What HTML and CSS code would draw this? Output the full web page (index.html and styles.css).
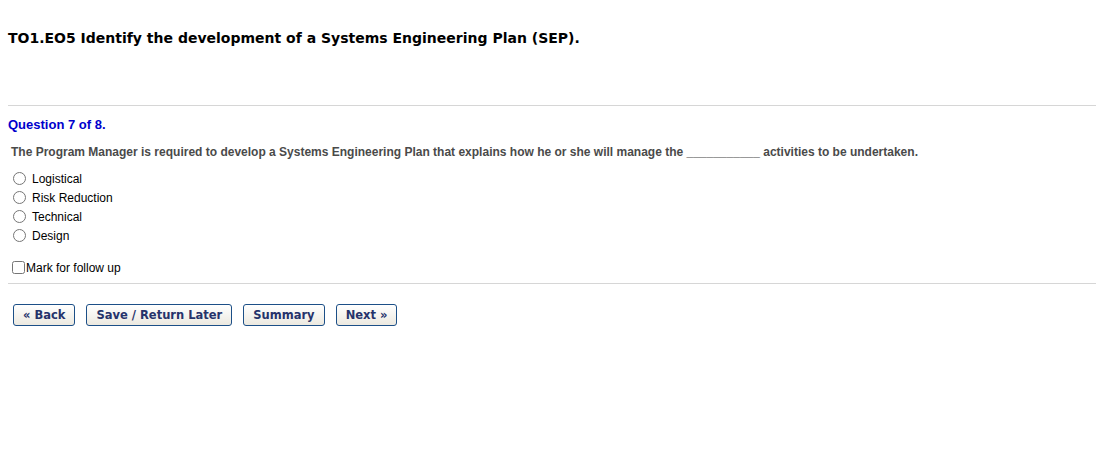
FILE: index.html
```html
<!DOCTYPE html>
<html>
<head>
<meta charset="utf-8">
<link rel="stylesheet" href="styles.css">
</head>
<body>
<div class="page">
  <h1 class="title">TO1.EO5 Identify the development of a Systems Engineering Plan (SEP).</h1>
  <hr class="rule rule-top">
  <div class="qnum">Question 7 of 8.</div>
  <div class="qtext">The Program Manager is required to develop a Systems Engineering Plan that explains how he or she will manage the ___________ activities to be undertaken.</div>
  <div class="options">
    <label class="opt"><input type="radio" name="a"><span>Logistical</span></label>
    <label class="opt"><input type="radio" name="a"><span>Risk Reduction</span></label>
    <label class="opt"><input type="radio" name="a"><span>Technical</span></label>
    <label class="opt"><input type="radio" name="a"><span>Design</span></label>
  </div>
  <label class="mark"><input type="checkbox"><span>Mark for follow up</span></label>
  <hr class="rule rule-bottom">
  <div class="buttons">
    <button class="btn">« Back</button>
    <button class="btn">Save / Return Later</button>
    <button class="btn">Summary</button>
    <button class="btn">Next »</button>
  </div>
</div>
</body>
</html>
```

FILE: styles.css
```css
html, body {
  margin: 0;
  padding: 0;
  background: #ffffff;
}
.page {
  padding: 0 0 0 8px;
  font-family: "Liberation Sans", Arial, sans-serif;
}
.title {
  font-family: "DejaVu Sans", Verdana, sans-serif;
  font-weight: bold;
  font-size: 14px;
  color: #000;
  margin: 0;
  padding-top: 30px;
  line-height: 16px;
}
.rule {
  border: 0;
  border-top: 1px solid #d6d6d6;
  margin: 0;
  height: 0;
}
.rule-top {
  margin-top: 59px;
}
.qnum {
  margin-top: 11px;
  color: #0000cc;
  font-weight: bold;
  font-size: 13px;
  line-height: 15px;
}
.qtext {
  margin-top: 13px;
  padding-left: 3px;
  color: #4a4a4a;
  font-weight: bold;
  font-size: 12px;
  line-height: 14px;
}
.options {
  margin-top: 10px;
  display: flex;
  flex-direction: column;
}
.opt {
  display: flex;
  align-items: center;
  height: 19px;
  font-size: 12px;
  color: #000;
}
.opt input {
  margin: 0 6px 0 5px;
  width: 13px;
  height: 13px;
}
.mark {
  margin-top: 15px;
  display: flex;
  align-items: center;
  height: 15px;
  font-size: 12px;
  color: #000;
}
.mark input {
  margin: 0 1px 0 4px;
  width: 13px;
  height: 13px;
}
.rule-bottom {
  margin-top: 8px;
}
.buttons {
  margin-top: 20px;
  padding-left: 5px;
  display: flex;
  gap: 11px;
}
.btn {
  font-family: "DejaVu Sans", Verdana, sans-serif;
  font-weight: bold;
  font-size: 11.5px;
  color: #26336b;
  background: linear-gradient(#ffffff, #ece9e0);
  border: 1px solid #1c4f87;
  border-radius: 3px;
  height: 22px;
  padding: 0 9px;
  line-height: 20px;
}
```
